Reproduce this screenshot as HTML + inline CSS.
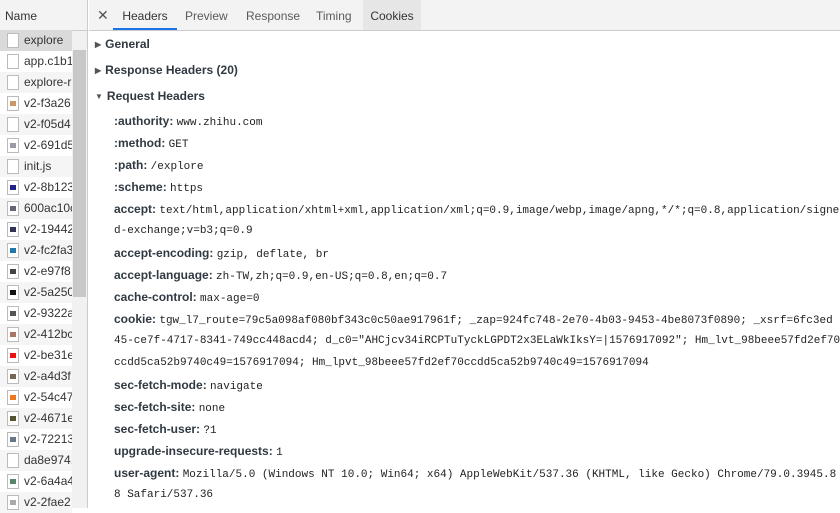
<!DOCTYPE html>
<html><head><meta charset="utf-8"><style>
*{margin:0;padding:0;box-sizing:border-box}
body{width:840px;height:508px;overflow:hidden;background:#fff;font-family:"Liberation Sans",sans-serif;font-size:12px;color:#222;position:relative}
#left{position:absolute;left:0;top:0;width:88px;height:508px;border-right:1px solid #ccc}
#lhead{height:31px;background:#f3f3f3;border-bottom:1px solid #ccc;padding:9px 0 0 5px;color:#333}
.row{position:absolute;left:0;width:72px;height:21px;padding-left:24px;line-height:21px;white-space:nowrap;overflow:hidden;color:#333}
.row i{position:absolute;left:7px;top:3px;width:12px;height:15px;border:1px solid #bbb;background:#fff}
.row i b{position:absolute;left:2px;top:4px;width:6px;height:5px}
#track{position:absolute;left:72px;top:31px;width:15px;height:477px;background:#f1f1f1}
#thumb{position:absolute;left:73px;top:50px;width:13px;height:247px;background:#c8c8c8}
#tabs{position:absolute;left:89px;top:0;right:0;height:31px;background:#f3f3f3;border-bottom:1px solid #ccc}
.tab{position:absolute;top:0;height:30px;line-height:32px;color:#5a5a5a;font-size:12px}
#right{position:absolute;left:89px;top:31px;right:0}
.sec{position:absolute;left:6px;font-weight:bold;color:#303942;font-size:12px}
.sec span{font-size:8px;color:#555;margin-right:4px;position:relative;top:-1px}
.h{position:absolute;left:25px;white-space:nowrap;font-size:12px;line-height:16px}
.h b{color:#303942}
.m{font-family:"Liberation Mono",monospace;font-size:11px;color:#222}
</style></head><body>
<div id="left">
<div id="lhead">Name</div>
<div class="row" style="top:30px;background:#dadada"><i></i>explore</div>
<div class="row" style="top:51px"><i></i>app.c1b1</div>
<div class="row" style="top:72px;background:#f5f5f5"><i></i>explore-r</div>
<div class="row" style="top:93px"><i><b style="background:#c96"></b></i>v2-f3a26</div>
<div class="row" style="top:114px;background:#f5f5f5"><i></i>v2-f05d4</div>
<div class="row" style="top:135px"><i><b style="background:#99a"></b></i>v2-691d5</div>
<div class="row" style="top:156px;background:#f5f5f5"><i></i>init.js</div>
<div class="row" style="top:177px"><i><b style="background:#228"></b></i>v2-8b123</div>
<div class="row" style="top:198px;background:#f5f5f5"><i><b style="background:#667"></b></i>600ac10c</div>
<div class="row" style="top:219px"><i><b style="background:#335"></b></i>v2-19442</div>
<div class="row" style="top:240px;background:#f5f5f5"><i><b style="background:#27a"></b></i>v2-fc2fa3</div>
<div class="row" style="top:261px"><i><b style="background:#444"></b></i>v2-e97f8</div>
<div class="row" style="top:282px;background:#f5f5f5"><i><b style="background:#111"></b></i>v2-5a250</div>
<div class="row" style="top:303px"><i><b style="background:#555"></b></i>v2-9322a</div>
<div class="row" style="top:324px;background:#f5f5f5"><i><b style="background:#a76"></b></i>v2-412bc</div>
<div class="row" style="top:345px"><i><b style="background:#e11"></b></i>v2-be31e</div>
<div class="row" style="top:366px;background:#f5f5f5"><i><b style="background:#765"></b></i>v2-a4d3f</div>
<div class="row" style="top:387px"><i><b style="background:#e72"></b></i>v2-54c47</div>
<div class="row" style="top:408px;background:#f5f5f5"><i><b style="background:#553"></b></i>v2-4671e</div>
<div class="row" style="top:429px"><i><b style="background:#678"></b></i>v2-72213</div>
<div class="row" style="top:450px;background:#f5f5f5"><i></i>da8e974.</div>
<div class="row" style="top:471px"><i><b style="background:#586"></b></i>v2-6a4a4</div>
<div class="row" style="top:492px;background:#f5f5f5"><i><b style="background:#aaa"></b></i>v2-2fae2</div>
<div id="track"></div><div id="thumb"></div>
</div>
<div id="tabs">
<div class="tab" style="left:8px;color:#555;font-size:14px;line-height:30px">✕</div>
<div class="tab" style="left:24px;width:64px;text-align:center;color:#333;border-bottom:2px solid #1a73e8">Headers</div>
<div class="tab" style="left:96px">Preview</div>
<div class="tab" style="left:157px">Response</div>
<div class="tab" style="left:227px">Timing</div>
<div class="tab" style="left:274px;width:58px;text-align:center;background:#e6e6e6;color:#333">Cookies</div>
</div>
<div id="right">
<div class="sec" style="top:6px"><span>▶</span>General</div>
<div class="sec" style="top:32px"><span>▶</span>Response Headers (20)</div>
<div class="sec" style="top:58px"><span>▼</span>Request Headers</div>
<div class="h" style="top:82px"><b>:authority:</b> <span class="m">www.zhihu.com</span></div>
<div class="h" style="top:104px"><b>:method:</b> <span class="m">GET</span></div>
<div class="h" style="top:126px"><b>:path:</b> <span class="m">/explore</span></div>
<div class="h" style="top:148px"><b>:scheme:</b> <span class="m">https</span></div>
<div class="h" style="top:170px"><b>accept:</b> <span class="m">text/html,application/xhtml+xml,application/xml;q=0.9,image/webp,image/apng,*/*;q=0.8,application/signe</span></div>
<div class="h m" style="top:192px">d-exchange;v=b3;q=0.9</div>
<div class="h" style="top:214px"><b>accept-encoding:</b> <span class="m">gzip, deflate, br</span></div>
<div class="h" style="top:236px"><b>accept-language:</b> <span class="m">zh-TW,zh;q=0.9,en-US;q=0.8,en;q=0.7</span></div>
<div class="h" style="top:258px"><b>cache-control:</b> <span class="m">max-age=0</span></div>
<div class="h" style="top:280px"><b>cookie:</b> <span class="m">tgw_l7_route=79c5a098af080bf343c0c50ae917961f; _zap=924fc748-2e70-4b03-9453-4be8073f0890; _xsrf=6fc3ed</span></div>
<div class="h m" style="top:302px">45-ce7f-4717-8341-749cc448acd4; d_c0="AHCjcv34iRCPTuTyckLGPDT2x3ELaWkIksY=|1576917092"; Hm_lvt_98beee57fd2ef70</div>
<div class="h m" style="top:324px">ccdd5ca52b9740c49=1576917094; Hm_lpvt_98beee57fd2ef70ccdd5ca52b9740c49=1576917094</div>
<div class="h" style="top:346px"><b>sec-fetch-mode:</b> <span class="m">navigate</span></div>
<div class="h" style="top:368px"><b>sec-fetch-site:</b> <span class="m">none</span></div>
<div class="h" style="top:390px"><b>sec-fetch-user:</b> <span class="m">?1</span></div>
<div class="h" style="top:412px"><b>upgrade-insecure-requests:</b> <span class="m">1</span></div>
<div class="h" style="top:434px"><b>user-agent:</b> <span class="m">Mozilla/5.0 (Windows NT 10.0; Win64; x64) AppleWebKit/537.36 (KHTML, like Gecko) Chrome/79.0.3945.8</span></div>
<div class="h m" style="top:456px">8 Safari/537.36</div>
</div>
</body></html>
